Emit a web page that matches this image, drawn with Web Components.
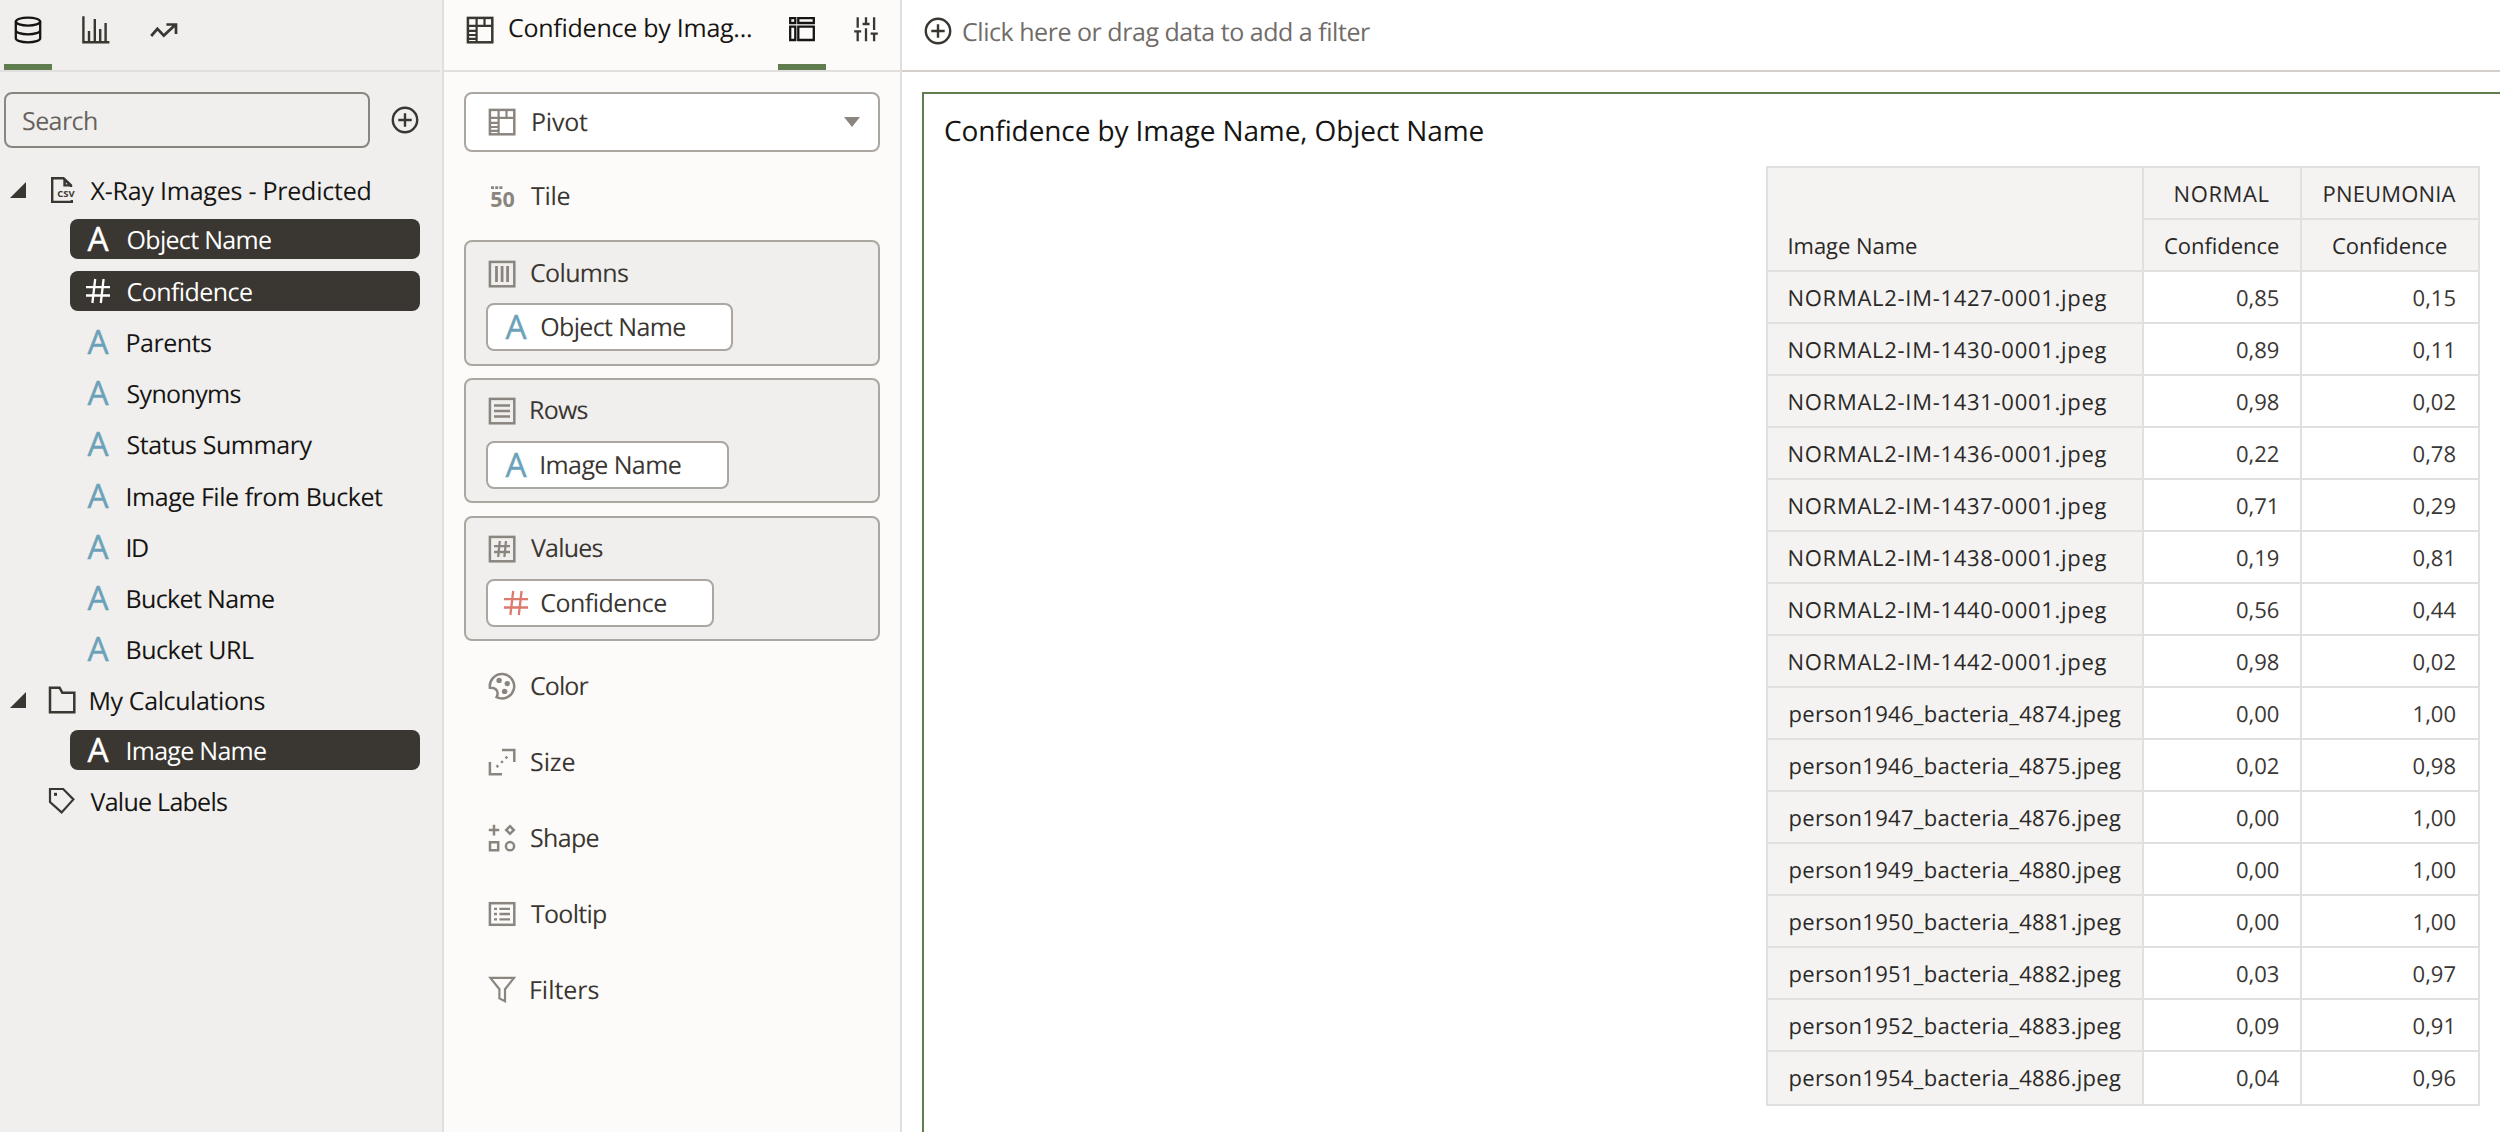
<!DOCTYPE html>
<html lang="en">
<head>
<meta charset="utf-8">
<title>Confidence by Image Name, Object Name</title>
<style>
html, body { margin: 0; height: 100%; overflow: hidden; }
body { font-family: "Open Sans", "Noto Sans", sans-serif; font-size: 25px; color: #161513; background: #fff; }
</style>
</head>
<body>
<viz-app></viz-app>
<script>
const define = (name, render) => customElements.define(name, class extends HTMLElement {
  connectedCallback() {
    if (this.shadowRoot) return;
    this.attachShadow({ mode: "open" }).innerHTML = render(this);
  }
});
const attr = (el, name, fallback = "") => el.getAttribute(name) ?? fallback;

/* Text run tracked so that its ink spans exactly `w` pixels. */
const pen = document.createElement("canvas").getContext("2d");
customElements.define("ui-text", class extends HTMLElement {
  connectedCallback() {
    if (this.shadowRoot) return;
    const text = attr(this, "text"), w = +attr(this, "w", "0");
    const root = this.attachShadow({ mode: "open" });
    root.innerHTML = `<style>
      :host { display: block; flex: none; white-space: nowrap; line-height: 1.36; text-rendering: geometricPrecision; font-variant-ligatures: none; }
      span { display: block; }
    </style><span></span>`;
    const span = root.querySelector("span");
    span.textContent = text;
    if (!w) return;
    const cs = getComputedStyle(this);
    pen.font = `${cs.fontWeight} ${cs.fontSize} ${cs.fontFamily}`;
    pen.fontKerning = "normal";
    const m = pen.measureText(text);
    const ink = m.actualBoundingBoxLeft + m.actualBoundingBoxRight;
    span.style.letterSpacing = ((w - ink) / (text.length - 1)).toFixed(3) + "px";
    span.style.marginLeft = m.actualBoundingBoxLeft.toFixed(2) + "px";
    this.style.width = w + "px";
  }
});

const frame = '<rect x="1.9" y="1.9" width="24.4" height="24.4"/>';
const pivot = frame + '<path d="M2 9.8H26M10.6 2V26M18.5 2V10M2 14.8H10M2 19H10M2 22.8H10" stroke-width="2.2"/>';
const ICONS = {
  data: [28, '<g stroke-width="2.3"><ellipse cx="14" cy="5.6" rx="12.2" ry="4"/><path d="M1.8 5.6v16.6c0 2.4 5.4 4.2 12.2 4.2s12.2-1.8 12.2-4.2V5.6M1.8 14.2c0 2.4 5.4 4.2 12.2 4.2s12.2-1.8 12.2-4.2"/></g>'],
  bars: [28, '<path d="M1.4 .3V26.2H27.4M7 15V26M12.8 3V26M18.2 13V26M23.6 7V26" stroke-width="2.4"/>'],
  trend: [28, '<path d="M1.2 20 7.4 12.8 13.8 19.6 25.6 8.6M16.4 8.5H26V18" stroke-width="2.7"/>'],
  plus: [28, '<circle cx="14" cy="14" r="12.2" stroke-width="2.4"/><path d="M14 7.3V20.7M7.3 14H20.7" stroke-width="2.4"/>'],
  csv: [28, '<path d="M23.8 24V25.9H4.2V2.2H15.5L23 9.2V11" stroke-width="2.4"/><path d="M15.3 2V10.5H24Z" fill="currentColor" stroke="none"/><path d="M17.8 6.4V8.3H19.8Z" fill="#f0efed" stroke="none"/><rect x="9" y="12.5" width="18" height="10" fill="#f0efed" stroke="none"/><text x="9.2" y="21.2" font-size="9.3" font-weight="700" textLength="17.4" lengthAdjust="spacingAndGlyphs" fill="currentColor" stroke="none">CSV</text>'],
  folder: [28, '<path d="M2 1.7H11.6L14.3 6.8H26.3V26.3H2Z"/>'],
  tag: [28, '<path d="M2 2H15.2L25.4 12.4 13.6 25.4 2 15Z" stroke-width="2.2"/><rect x="6" y="5.8" width="3" height="3" fill="currentColor" stroke="none"/>'],
  pivot: [28, pivot],
  layout: [28, '<path d="M2.2 2.2H7.3V7H2.2ZM10.3 2.2H25.8V7H10.3ZM2.2 10.6H7.3V24H2.2ZM10.3 10.6H25.8V24H10.3Z" stroke-width="2.3"/>'],
  sliders: [28, '<path d="M5.7 1.2V11.7M2.2 15.3H9.2M5.7 15.3V25.2M14 1.2V8M10.6 8H17.6M14 12.2V25.2M22.1 1.2V14M18.6 17.7H25.8M22.1 17.7V25.2" stroke-width="2.3"/>'],
  tile: [28, '<path d="M3 5.6H6M7.2 5.6H10.2M11.4 5.6H14.4" stroke-width="2.8"/><text x="2.2" y="25.4" font-size="21" font-weight="700" textLength="24.6" lengthAdjust="spacingAndGlyphs" fill="currentColor" stroke="none">50</text>'],
  columns: [28, frame + '<path d="M8.5 6V22M14.1 6V22M19.6 6V22" stroke-width="2.8"/>'],
  rows: [28, frame + '<path d="M6 8.5H22M6 14H22M6 19.5H22" stroke-width="2.5"/>'],
  values: [28, frame + '<path d="M6 11.2H22M6 17H22M11.8 6 10.2 22M18 6 16.4 22" stroke-width="2.3"/>'],
  color: [28, '<path d="M1.9 15.8A12.2 12.2 0 1 1 8.6 25.2C10.8 21 9.5 15.3 1.9 15.8Z"/><g fill="currentColor" stroke="none"><circle cx="11.1" cy="8.4" r="2.7"/><circle cx="19.3" cy="11.6" r="2.7"/><circle cx="16.6" cy="19.4" r="2.7"/></g>'],
  size: [28, '<path d="M14 1.9H26.3V14M1.9 14V26.2H14"/><path d="m9.4 16.6 1.7 1.7-1.7 1.7-1.7-1.7zM14 12.2l1.7 1.7-1.7 1.7-1.7-1.7zM18.4 7.8l1.7 1.7-1.7 1.7-1.7-1.7z" fill="currentColor" stroke="none"/>'],
  shape: [28, '<path d="M6 .8V11.4M.8 6H11.2M22 2.2 25.8 6 22 9.8 18.2 6ZM2 18.2H10.2V26.2H2Z" stroke-width="2.5"/><circle cx="22" cy="22.2" r="4.1" stroke-width="2.5"/>'],
  tooltip: [28, '<rect x="1.9" y="3.2" width="24.4" height="21.6"/><path d="M6 8.8H9M11.4 8.8H22M6 14H9M11.4 14H22M6 19.3H9M11.4 19.3H22" stroke-width="2.3"/>'],
  filters: [28, '<path d="M2.4 1.9H26L17 13.2V25.2L11.4 22.4V13.2Z" stroke-width="2.2"/>'],
  text: [24, '<text x="12" y="23.9" font-size="33.4" text-anchor="middle" fill="currentColor" stroke="currentColor" stroke-width=".4">A</text>'],
  number: [24, '<path d="M0 8.2H24M0 16.5H24M9.2 0 6.4 24M17.6 0 14.8 24" stroke-width="2.3"/>'],
  caret: [16, '<path d="M0 3H16L8 13Z" fill="currentColor" stroke="none"/>'],
  expanded: [16, '<path d="M0 16H16V0Z" fill="currentColor" stroke="none"/>']
};
define("ui-icon", el => {
  const [size, body] = ICONS[attr(el, "name")];
  return `<style>:host{display:block;flex:none;width:${size}px;height:${size}px}svg{display:block;overflow:visible}</style>
  <svg width="${size}" height="${size}" viewBox="0 0 ${size} ${size}" fill="none" stroke="currentColor" stroke-width="2.5">${body}</svg>`;
});

define("ui-tab", el => `<style>
  :host { display: flex; box-sizing: border-box; width: 48px; height: 70px; padding-top: 16px; justify-content: center; color: #3a3631; border-bottom: 6px solid transparent; }
  :host([active]) { border-bottom-color: #5f7d4f; color: #161513; }
</style><ui-icon name="${attr(el, "icon")}"></ui-icon>`);

define("tree-group", el => `<style>
  :host { display: block; }
  .head { display: flex; align-items: center; height: var(--head, 49.5px); padding-left: 10px; }
  ui-icon, .gap { color: #3a3631; }
  .gap, [name=expanded] { width: 16px; margin-right: 22px; }
  ui-text { margin-left: 14.5px; padding-top: 2px; }
</style><div class="head">${el.hasAttribute("leaf") ? '<span class="gap"></span>' : '<ui-icon name="expanded"></ui-icon>'}<ui-icon name="${attr(el, "icon")}"></ui-icon><ui-text text="${attr(el, "label")}" w="${attr(el, "w")}"></ui-text></div><slot></slot>`);

define("tree-item", el => `<style>
  :host { display: flex; align-items: center; height: 51.25px; padding-left: 70px; }
  div { display: flex; align-items: center; box-sizing: border-box; width: 350px; height: 40px; padding-left: 16px; gap: 17.5px; border-radius: 8px; }
  ui-icon { color: #6ba2b9; }
  ui-text { padding-top: 2px; }
  :host([selected]) div { background: #3a3631; color: #fff; }
  :host([selected]) ui-icon { color: #fff; }
</style><div><ui-icon name="${attr(el, "icon", "text")}"></ui-icon><ui-text text="${attr(el, "label")}" w="${attr(el, "w")}"></ui-text></div>`);

define("data-panel", () => `<style>
  :host { display: block; box-sizing: border-box; width: 444px; flex: none; background: #f0efed; border-right: 2px solid #e1dfdd; }
  header { display: flex; gap: 20px; height: 70px; padding-left: 4px; margin-right: 2px; border-bottom: 2px solid #e1dfdd; }
  .search { display: flex; align-items: center; padding: 20px 0 0 4px; gap: 21px; color: #3a3631; }
  .box { display: flex; align-items: center; box-sizing: border-box; width: 366px; height: 56px; padding: 2px 0 0 17px; border: 2px solid #8b8580; border-radius: 8px; color: #66625e; }
  nav { padding-top: 18.7px; }
</style>
<header><ui-tab icon="data" active></ui-tab><ui-tab icon="bars"></ui-tab><ui-tab icon="trend"></ui-tab></header>
<div class="search"><div class="box"><ui-text text="Search" w="74"></ui-text></div><ui-icon name="plus"></ui-icon></div>
<nav>
  <tree-group style="--head:47px" icon="csv" label="X-Ray Images - Predicted" w="280">
    <tree-item selected label="Object Name" w="143.5"></tree-item>
    <tree-item selected icon="number" label="Confidence" w="124.5"></tree-item>
    <tree-item label="Parents" w="83.5"></tree-item>
    <tree-item label="Synonyms" w="113"></tree-item>
    <tree-item label="Status Summary" w="185"></tree-item>
    <tree-item label="Image File from Bucket" w="255.5"></tree-item>
    <tree-item label="ID" w="20.5"></tree-item>
    <tree-item label="Bucket Name" w="146.5"></tree-item>
    <tree-item label="Bucket URL" w="126.5"></tree-item>
  </tree-group>
  <tree-group icon="folder" label="My Calculations" w="174"><tree-item selected label="Image Name" w="138.5"></tree-item></tree-group>
  <tree-group style="--head:51px" leaf icon="tag" label="Value Labels" w="136.5"></tree-group>
</nav>`);

define("drop-target", el => `<style>
  :host { display: block; box-sizing: border-box; margin: 12px 0; border: 2px solid transparent; color: #3a3631; }
  :host([filled]) { height: 125.6px; background: #f0efed; border-color: #aca6a1; border-radius: 8px; }
  .head { display: flex; align-items: center; gap: 15px; height: 60px; padding-left: 22px; }
  :host([filled]) .head { height: 63px; }
  :host([filled]) ui-text { margin-bottom: 2px; }
  ui-icon { color: #8b8580; }
</style><div class="head"><ui-icon name="${attr(el, "icon")}"></ui-icon><ui-text text="${attr(el, "label")}" w="${attr(el, "w")}"></ui-text></div><slot></slot>`);

define("data-chip", el => `<style>
  :host { display: flex; width: max-content; box-sizing: border-box; height: 48px; margin: -2px 0 0 20px; padding: 0 46px 0 16px; align-items: center; gap: 13.2px; background: #fff; border: 2px solid #aca6a1; border-radius: 8px; }
  ui-icon { color: ${attr(el, "icon") === "number" ? "#dd7a6d" : "#6ba2b9"}; }
</style><ui-icon name="${attr(el, "icon")}"></ui-icon><ui-text text="${attr(el, "label")}" w="${attr(el, "w")}"></ui-text>`);

define("grammar-panel", () => `<style>
  :host { display: block; box-sizing: border-box; width: 458px; flex: none; background: #fcfbf9; border-right: 2px solid #e1dfdd; }
  header { display: flex; box-sizing: border-box; height: 72px; padding-left: 22px; border-bottom: 2px solid #e1dfdd; }
  header > ui-icon { margin: 16px 15px 0 0; color: #3a3631; }
  header > ui-text { margin-top: 11px; }
  header .tabs { display: flex; gap: 16px; margin-left: 27px; }
  main { padding: 20px 20px 0; }
  .select { display: flex; align-items: center; box-sizing: border-box; height: 60px; padding: 0 18px 0 22px; border: 2px solid #aca6a1; border-radius: 8px; background: #fff; color: #3a3631; }
  .select ui-icon { color: #8b8580; }
  .select ui-text { margin: 0 auto 0 17px; }
</style>
<header><ui-icon name="pivot"></ui-icon><ui-text text="Confidence by Imag..." w="242"></ui-text><div class="tabs"><ui-tab icon="layout" active></ui-tab><ui-tab icon="sliders"></ui-tab></div></header>
<main>
  <div class="select"><ui-icon name="pivot"></ui-icon><ui-text text="Pivot" w="55"></ui-text><ui-icon name="caret"></ui-icon></div>
  <drop-target icon="tile" label="Tile" w="38.5"></drop-target>
  <drop-target filled icon="columns" label="Columns" w="97"><data-chip icon="text" label="Object Name" w="144"></data-chip></drop-target>
  <drop-target filled icon="rows" label="Rows" w="56.5"><data-chip icon="text" label="Image Name" w="139.5"></data-chip></drop-target>
  <drop-target filled icon="values" label="Values" w="71.5" style="margin-top:12.6px"><data-chip icon="number" label="Confidence" w="125"></data-chip></drop-target>
  <drop-target icon="color" label="Color" w="57.5" style="margin-top:12.6px"></drop-target>
  <drop-target icon="size" label="Size" w="43.5"></drop-target>
  <drop-target icon="shape" label="Shape" w="67.5"></drop-target>
  <drop-target icon="tooltip" label="Tooltip" w="75"></drop-target>
  <drop-target icon="filters" label="Filters" w="67.5"></drop-target>
</main>`);

const ROWS = [
  ["NORMAL2-IM-1427-0001.jpeg", "0,85", "0,15"], ["NORMAL2-IM-1430-0001.jpeg", "0,89", "0,11"],
  ["NORMAL2-IM-1431-0001.jpeg", "0,98", "0,02"], ["NORMAL2-IM-1436-0001.jpeg", "0,22", "0,78"],
  ["NORMAL2-IM-1437-0001.jpeg", "0,71", "0,29"], ["NORMAL2-IM-1438-0001.jpeg", "0,19", "0,81"],
  ["NORMAL2-IM-1440-0001.jpeg", "0,56", "0,44"], ["NORMAL2-IM-1442-0001.jpeg", "0,98", "0,02"],
  ["person1946_bacteria_4874.jpeg", "0,00", "1,00"], ["person1946_bacteria_4875.jpeg", "0,02", "0,98"],
  ["person1947_bacteria_4876.jpeg", "0,00", "1,00"], ["person1949_bacteria_4880.jpeg", "0,00", "1,00"],
  ["person1950_bacteria_4881.jpeg", "0,00", "1,00"], ["person1951_bacteria_4882.jpeg", "0,03", "0,97"],
  ["person1952_bacteria_4883.jpeg", "0,09", "0,91"], ["person1954_bacteria_4886.jpeg", "0,04", "0,96"]
];
const t = (text, w = 0) => `<ui-text text="${text}" w="${w}"></ui-text>`;
define("pivot-table", () => `<style>
  :host { display: grid; grid-template-columns: 374px 156px 176px; grid-template-rows: repeat(17, 50px) 52px; gap: 2px; padding: 2px; width: max-content; background: #e0e0e0; font-size: 22px; color: #2b2927; }
  .h, .v { display: flex; box-sizing: border-box; padding-top: 12px; }
  .h { background: #f4f3f2; }
  .c { justify-content: center; }
  .r { padding-left: 21.5px; }
  .corner { grid-row: span 2; padding-top: 64px; }
  .v { justify-content: flex-end; padding-right: 20.6px; background: #fff; color: #3a3735; }
  .v.last { padding-right: 22px; }
</style>
<div class="h r corner">${t("Image Name", 127.5)}</div><div class="h c">${t("NORMAL", 93)}</div><div class="h c">${t("PNEUMONIA", 131)}</div>
<div class="h c">${t("Confidence", 114)}</div><div class="h c">${t("Confidence", 114)}</div>
${ROWS.map(([name, a, b]) => `<div class="h r">${t(name, name[0] === "N" ? 317 : 331.5)}</div><div class="v">${t(a)}</div><div class="v last">${t(b)}</div>`).join("")}`);

define("viz-canvas", () => `<style>
  :host { display: flex; flex-direction: column; flex: 1; min-width: 0; background: #fff; }
  .filter { display: flex; flex: none; align-items: center; box-sizing: border-box; height: 72px; padding: 0 0 8px 22px; gap: 11px; border-bottom: 2px solid #d5cfcb; color: #3a3631; }
  .filter ui-text { color: #716c68; margin-top: 2px; }
  .viz { flex: 1; margin: 20px 0 0 20px; padding-left: 21px; border: solid #5f7d4f; border-width: 2px 0 0 2px; }
  .title { height: 72px; padding-top: 18px; box-sizing: border-box; font-size: 28px; }
  pivot-table { margin: 0 20px 0 auto; }
</style>
<div class="filter"><ui-icon name="plus"></ui-icon>${t("Click here or drag data to add a filter", 407)}</div>
<section class="viz"><div class="title">${t("Confidence by Image Name, Object Name", 538.5)}</div><pivot-table></pivot-table></section>`);

define("viz-app", () => `<style>:host { display: flex; width: 2500px; height: 1132px; overflow: hidden; }</style>
<data-panel></data-panel><grammar-panel></grammar-panel><viz-canvas></viz-canvas>`);
</script>
</body>
</html>
